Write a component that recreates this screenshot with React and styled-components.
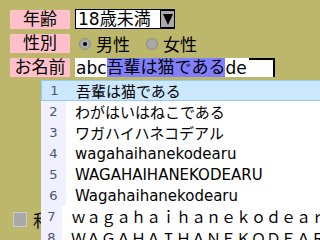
import styled, { createGlobalStyle } from 'styled-components'

const GlobalStyle = createGlobalStyle`
	html, body {
		margin: 0;
		padding: 0;
		background: #bdb76b;
	}
	body {
		font-family: "DejaVu Sans", "Noto Sans CJK JP", sans-serif;
		width: 320px;
		height: 240px;
		overflow: hidden;
	}
`

const candidates = [
	'吾輩は猫である',
	'わがはいはねこである',
	'ワガハイハネコデアル',
	'wagahaihanekodearu',
	'WAGAHAIHANEKODEARU',
	'Wagahaihanekodearu',
	'ｗａｇａｈａｉｈａｎｅｋｏｄｅａｒｕ',
	'ＷＡＧＡＨＡＩＨＡＮＥＫＯＤＥＡＲＵ',
]

const Page = styled.div`
	position: relative;
	width: 320px;
	height: 240px;
	padding: 9px 0 0 10px;
	box-sizing: border-box;
	display: flex;
	flex-direction: column;
	gap: 5px;
	overflow: hidden;
`

const Row = styled.div`
	display: flex;
	align-items: center;
	gap: 5px;
	height: ${(p) => p.h || 20}px;
`

const Label = styled.div`
	width: 60px;
	height: 19px;
	background: #ffc0cb;
	font-size: 17px;
	line-height: 19px;
	text-align: center;
	color: #000;
`

const Select = styled.div`
	display: flex;
	align-items: center;
	height: 20px;
	width: 100px;
	box-sizing: border-box;
	border: 1px solid #000;
	background: #fff;
	font-size: 17px;
	padding-left: 2px;
`

const SelectText = styled.span`
	flex: 1;
	line-height: 18px;
`

const Arrow = styled.div`
	width: 14px;
	height: 18px;
	box-sizing: border-box;
	background: #a9a9a9;
	border: 1px solid #000;
	border-right: 0;
	display: flex;
	align-items: center;
	justify-content: center;
	&::after {
		content: '';
		border-left: 5px solid transparent;
		border-right: 5px solid transparent;
		border-top: 11px solid #000;
	}
`

const RadioGroup = styled.label`
	display: flex;
	align-items: center;
	gap: 5px;
	font-size: 17px;
	margin-left: 4px;
	margin-right: 7px;
`

const Radio = styled.span`
	width: 10px;
	height: 10px;
	border-radius: 50%;
	background: #a9a9a9;
	border: 1px solid #888;
	display: flex;
	align-items: center;
	justify-content: center;
	&::after {
		content: '';
		width: 4px;
		height: 4px;
		border-radius: 50%;
		background: ${(p) => (p.checked ? '#000' : 'transparent')};
	}
`

const NameInput = styled.div`
	display: flex;
	align-items: center;
	height: 19px;
	font-size: 17px;
	background: #fff;
	padding-left: 1px;
`

const Composing = styled.span`
	background: #8080ff;
	line-height: 19px;
`

const Caret = styled.span`
	width: 26px;
	height: 19px;
	box-sizing: border-box;
	border: 2px solid #000;
	border-left: 0;
	border-bottom: 0;
	margin-left: 2px;
	background: #fff;
`

const Bottom = styled.div`
	position: absolute;
	left: 13px;
	top: 207px;
	display: flex;
	align-items: center;
	gap: 6px;
	font-size: 17px;
`

const Check = styled.span`
	width: 12px;
	height: 13px;
	background: #a9a9a9;
	border: 1px solid #ccc;
`

const Popup = styled.div`
	position: absolute;
	left: 41px;
	top: 80px;
	width: 300px;
	background: #fff;
	font-family: "DejaVu Sans", "Noto Sans CJK JP", sans-serif;
	font-size: 15px;
	color: #000;
`

const Item = styled.div`
	display: flex;
	height: 21px;
	box-sizing: border-box;
	align-items: center;
	background: ${(p) => (p.selected ? '#cce8ff' : '#fff')};
	border: ${(p) => (p.selected ? '1px solid #99c9ef' : '0')};
`

const Num = styled.span`
	width: 25px;
	align-self: stretch;
	display: flex;
	align-items: center;
	justify-content: center;
	color: #4c5670;
	font-size: 13px;
	background: ${(p) => (p.selected ? 'transparent' : '#f0f0ff')};
`

const Text = styled.span`
	padding-left: 9px;
	white-space: nowrap;
`

export default function App() {
	return (
		<>
			<GlobalStyle />
			<Page>
				<Row>
					<Label>年齢</Label>
					<Select>
						<SelectText>18歳未満</SelectText>
						<Arrow />
					</Select>
				</Row>
				<Row h={19}>
					<Label>性別</Label>
					<RadioGroup><Radio checked />男性</RadioGroup>
					<RadioGroup><Radio />女性</RadioGroup>
				</Row>
				<Row h={19}>
					<Label>お名前</Label>
					<NameInput>
						abc<Composing>吾輩は猫である</Composing>de
						<Caret />
					</NameInput>
				</Row>
				<Bottom>
					<Check />
					和
				</Bottom>
				<Popup>
					{candidates.map((c, i) => (
						<Item key={i} selected={i === 0}>
							<Num selected={i === 0}>{i + 1}</Num>
							<Text>{c}</Text>
						</Item>
					))}
				</Popup>
			</Page>
		</>
	)
}
